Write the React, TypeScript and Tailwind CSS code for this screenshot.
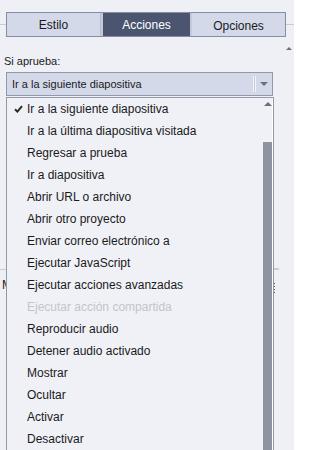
import React from "react";

const items: { label: string; disabled?: boolean; checked?: boolean }[] = [
  { label: "Ir a la siguiente diapositiva", checked: true },
  { label: "Ir a la última diapositiva visitada" },
  { label: "Regresar a prueba" },
  { label: "Ir a diapositiva" },
  { label: "Abrir URL o archivo" },
  { label: "Abrir otro proyecto" },
  { label: "Enviar correo electrónico a" },
  { label: "Ejecutar JavaScript" },
  { label: "Ejecutar acciones avanzadas" },
  { label: "Ejecutar acción compartida", disabled: true },
  { label: "Reproducir audio" },
  { label: "Detener audio activado" },
  { label: "Mostrar" },
  { label: "Ocultar" },
  { label: "Activar" },
  { label: "Desactivar" },
];

export default function App() {
  return (
    <div
      className="relative w-[294px] h-[450px] overflow-hidden bg-[#eff0f6] text-[#1a1a1a]"
      style={{ fontFamily: '"Liberation Sans", Arial, sans-serif' }}
    >
      {/* tabs row */}
      <div className="relative h-[37px] pt-[12px]">
        <div className="absolute left-0 right-0 top-[24px] h-px bg-[#c9cbd6]" />
        <div className="relative ml-[6px] w-[280px] h-[25px] flex border border-[#878da3] bg-[#d4d9ea] text-[12px]">
          <div className="flex-1 flex items-center justify-center border-r border-[#b8bccb]">Estilo</div>
          <div className="w-[91px] flex items-start pt-[3px] justify-center bg-[#4b5570] text-white border-x-2 border-[#c5c9d8]">
            Acciones
          </div>
          <div className="flex-1 flex items-center justify-center pt-[2px]">Opciones</div>
        </div>
      </div>

      {/* panel scroll arrow */}
      <div className="absolute right-[2px] top-[47px] w-0 h-0 border-l-[3px] border-r-[3px] border-b-[3px] border-l-transparent border-r-transparent border-b-[#6b7080]" />

      {/* label */}
      <div className="pl-[4px] pt-[18px] text-[11px] leading-[13px]">Si aprueba:</div>

      {/* select */}
      <div className="ml-[6px] mt-[4px] w-[267px] h-[24px] flex items-center border border-[#9399ad] bg-[#d4d9ea] text-[11px]">
        <div className="flex-1 pl-[5px]">Ir a la siguiente diapositiva</div>
        <div className="w-[3px] h-[16px] border-x border-[#f4f5fa] bg-[#c5c9d8]" />
        <div className="w-[16px] flex justify-center">
          <div className="w-0 h-0 border-l-[4px] border-r-[4px] border-t-[4px] border-l-transparent border-r-transparent border-t-[#6b7080]" />
        </div>
      </div>

      {/* background content hidden behind the list */}
      <div className="absolute left-0 top-[269px] w-[6px] h-px bg-[#c9cbd6]" />
      <div className="absolute left-[2px] top-[278px] text-[12px] leading-[14px] text-[#222]">M</div>
      <div className="absolute left-[273px] top-[268px] w-[6px] h-[2px] bg-[#c9cbd6]" />
      <div className="absolute left-[274px] top-[283px] flex flex-col gap-[2px]">
        <div className="w-px h-px bg-[#4b5570]" />
        <div className="w-px h-px bg-[#4b5570]" />
        <div className="w-px h-px bg-[#4b5570]" />
        <div className="w-px h-px bg-[#4b5570]" />
      </div>

      {/* dropdown list */}
      <div className="absolute left-[6px] top-[97px] w-[268px] h-[360px] border border-[#9399ad] bg-[#f0f1f7] flex">
        <div className="flex-1 flex flex-col">
          {items.map((it) => (
            <div
              key={it.label}
              className={`h-[22px] flex items-center text-[12px] leading-[14px] ${
                it.disabled ? "text-[#c2c4cd]" : "text-[#1a1a1a]"
              }`}
            >
              <div className="w-[20px] flex justify-center pl-[2px]">
                {it.checked && (
                  <svg width="9" height="8" viewBox="0 0 9 8">
                    <path d="M1 4.2 L3.4 6.6 L8 1.2" stroke="#2a2a2a" strokeWidth="2" fill="none" />
                  </svg>
                )}
              </div>
              <span className="whitespace-nowrap">{it.label}</span>
            </div>
          ))}
        </div>
        <div className="w-[10px] flex flex-col items-center border-r border-white">
          <div className="mt-[4px] w-0 h-0 border-l-[4px] border-r-[4px] border-b-[4px] border-l-transparent border-r-transparent border-b-[#6b7080]" />
          <div className="mt-[36px] w-[9px] flex-1 bg-[#8e93a0]" />
        </div>
      </div>
    </div>
  );
}
